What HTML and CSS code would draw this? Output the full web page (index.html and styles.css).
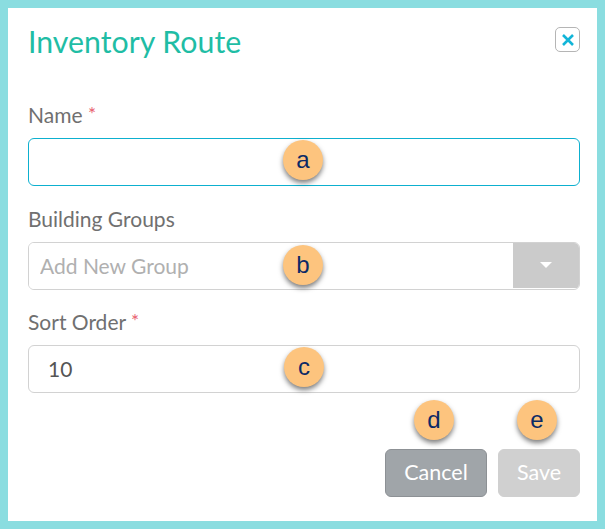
FILE: index.html
```html
<!DOCTYPE html>
<html lang="en">
<head>
  <meta charset="UTF-8">
  <meta name="viewport" content="width=device-width, initial-scale=1.0">
  <title>Inventory Route</title>
  <link rel="stylesheet" href="styles.css">
</head>
<body>
  <div class="modal">
    <div class="modal-head">
      <h1>Inventory Route</h1>
      <button class="close-btn" type="button" aria-label="Close">
        <svg width="14" height="14" viewBox="0 0 14 14"><path d="M2 2 L12 12 M12 2 L2 12" stroke="#12b5d8" stroke-width="2.6" fill="none"/></svg>
      </button>
    </div>

    <form class="route-form">
      <div class="field">
        <label>Name <span class="req">*</span></label>
        <div class="control">
          <input type="text" class="input input-focus">
          <span class="badge badge-a">a</span>
        </div>
      </div>

      <div class="field">
        <label>Building Groups</label>
        <div class="control">
          <div class="combo">
            <input type="text" class="combo-input" placeholder="Add New Group">
            <span class="combo-toggle"><span class="caret"></span></span>
          </div>
          <span class="badge badge-b">b</span>
        </div>
      </div>

      <div class="field">
        <label>Sort Order <span class="req">*</span></label>
        <div class="control">
          <input type="text" class="input input-num" value="10">
          <span class="badge badge-c">c</span>
        </div>
      </div>

      <div class="actions">
        <div class="action">
          <span class="badge badge-d">d</span>
          <button type="button" class="btn btn-cancel">Cancel</button>
        </div>
        <div class="action">
          <span class="badge badge-e">e</span>
          <button type="button" class="btn btn-save">Save</button>
        </div>
      </div>
    </form>
  </div>
</body>
</html>
```

FILE: styles.css
```css
html, body {
  height: 100%;
}
body {
  margin: 0;
  box-sizing: border-box;
  border: 8px solid #8adde0;
  background-color: #fff;
  font-family: Lato, "Open Sans", sans-serif;
  overflow: hidden;
}
.modal {
  padding: 0 17px 0 20px;
}
.modal-head {
  display: flex;
  justify-content: space-between;
  align-items: flex-start;
  height: 86px;
}
.modal-head h1 {
  margin: 15px 0 0;
  font-size: 30.3px;
  line-height: 36px;
  font-weight: 400;
  color: #1fbda5;
}
.close-btn {
  display: flex;
  align-items: center;
  justify-content: center;
  width: 25px;
  height: 25px;
  margin-top: 19px;
  padding: 0;
  background: #fff;
  border: 1px solid #b5b5b5;
  border-radius: 5px;
}
.field + .field {
  margin-top: 11.5px;
}
.field label {
  display: block;
  height: 44px;
  line-height: 42px;
  font-size: 21px;
  color: #707070;
}
.req {
  position: relative;
  top: -2px;
  font-size: 19px;
  color: #e8606e;
}
.control {
  position: relative;
}
.input {
  display: block;
  box-sizing: border-box;
  width: 100%;
  height: 48px;
  border: 1px solid #d2d2d2;
  border-radius: 6px;
  outline: none;
  font-family: inherit;
  font-size: 21px;
  color: #555;
  background: #fff;
}
.input-focus {
  border-color: #0db0cf;
}
.input-num {
  padding: 0 19px 2px;
}
.combo {
  display: flex;
  box-sizing: border-box;
  height: 48px;
  border: 1px solid #d2d2d2;
  border-radius: 6px;
  overflow: hidden;
}
.combo-input {
  flex: 1;
  min-width: 0;
  padding: 0 11px;
  border: none;
  outline: none;
  font-family: inherit;
  font-size: 21px;
}
.combo-input::placeholder {
  color: #b0b0b0;
  opacity: 1;
}
.combo-toggle {
  display: flex;
  align-items: center;
  justify-content: center;
  width: 66px;
  margin-bottom: 1px;
  background-color: #cbcbcb;
}
.caret {
  border-left: 6px solid transparent;
  border-right: 6px solid transparent;
  border-top: 6px solid #fff;
}
.actions {
  display: flex;
  justify-content: flex-end;
  gap: 11px;
  margin-top: 8px;
}
.action {
  position: relative;
  padding-top: 48px;
}
.btn {
  display: block;
  box-sizing: border-box;
  height: 48px;
  padding: 0 0 2px;
  border-radius: 6px;
  font-family: inherit;
  font-size: 21.5px;
  color: #fff;
}
.btn-cancel {
  width: 102px;
  background-color: #a0a5a9;
  border: 1px solid #8d9195;
}
.btn-save {
  width: 82px;
  background-color: #d0d0d0;
  border: 1px solid #d0d0d0;
}

/* letter markers laid over the form */
.badge {
  position: absolute;
  width: 40px;
  height: 40px;
  border-radius: 50%;
  background-color: #fdc47e;
  box-shadow: 0 3px 5px rgba(0, 0, 0, 0.5);
  color: #0c2a66;
  font-family: "Liberation Sans", Arial, sans-serif;
  font-size: 24px;
  line-height: 40px;
  text-align: center;
}
.badge-a {
  left: 255px;
  top: 2px;
}
.badge-b {
  left: 255px;
  top: 3px;
}
.badge-c {
  left: 256px;
  top: 2px;
}
.badge-d {
  left: 29px;
  top: -1px;
}
.badge-e {
  left: 19px;
  top: -1px;
}
```
